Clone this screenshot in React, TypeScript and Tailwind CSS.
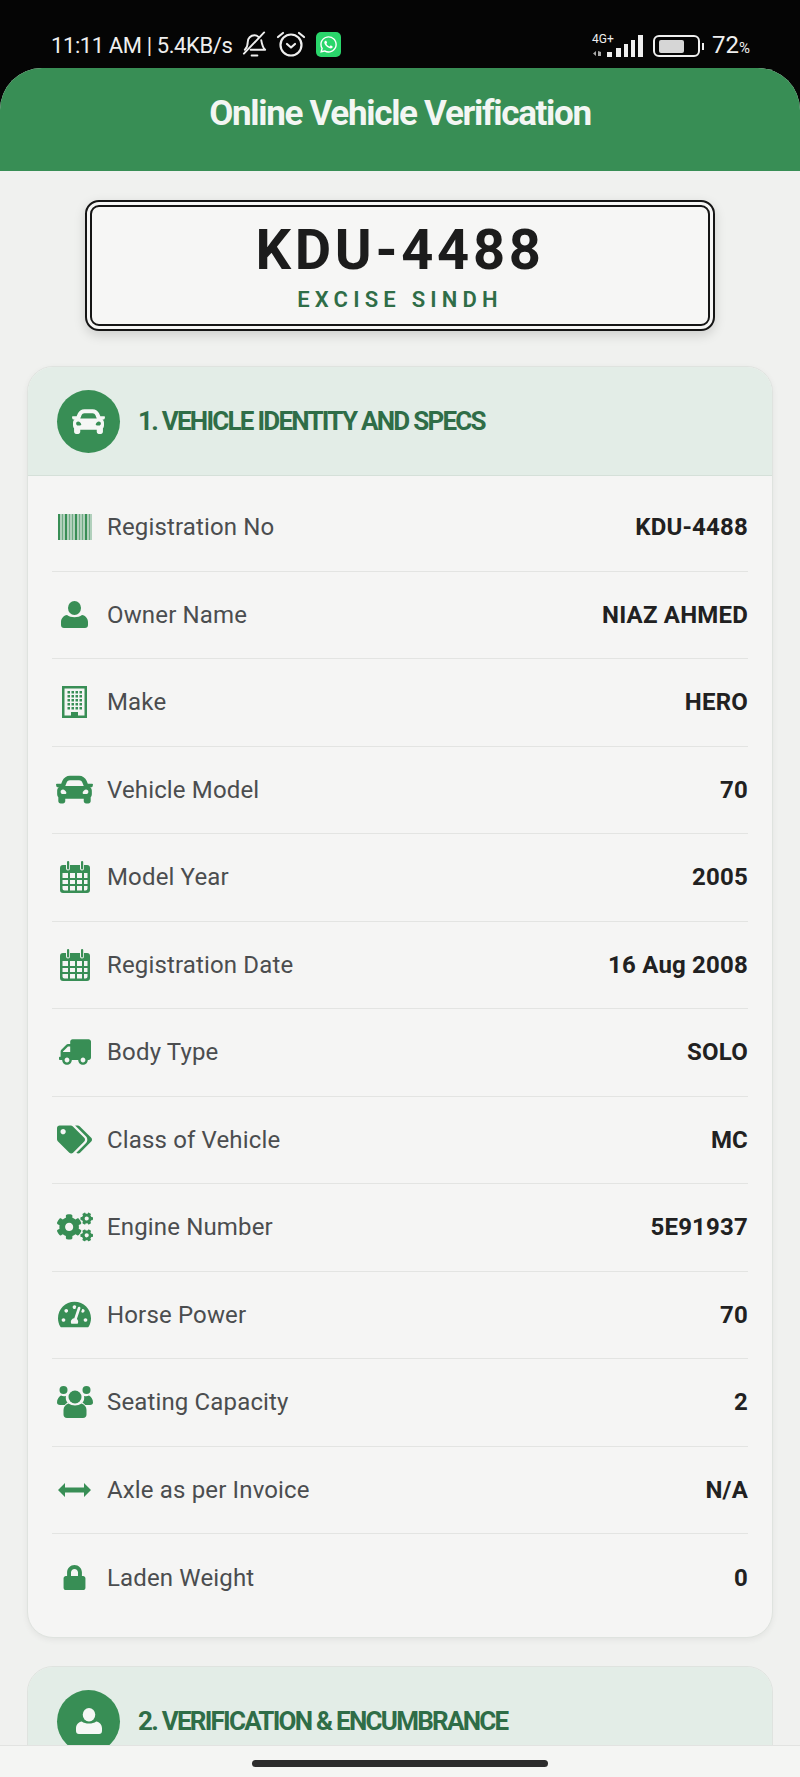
import React from "react";
import { FaCar, FaCogs, FaLock, FaTachometerAlt, FaTags, FaTruck, FaWhatsapp } from "react-icons/fa";

function Barcode() {
  const bars = [2, 1, 1, 1, 2, 1, 1, 1, 1, 1, 2, 1, 1, 1, 1, 1, 2, 1, 1, 1, 1, 1, 2, 1, 1];
  let x = 0;
  return (
    <svg width="34" height="26" viewBox="0 0 34 26">
      {bars.map((w, i) => {
        const rect = <rect key={i} x={x} y="0" width={w} height="26" fill="currentColor" opacity={w === 1 ? 0.7 : 1} />;
        x += w + 0.5;
        return rect;
      })}
    </svg>
  );
}

function PersonIcon({ size = 27 }: { size?: number }) {
  return (
    <svg width={size} height={size} viewBox="0 0 27 27" fill="currentColor">
      <ellipse cx="13.500" cy="7" rx="6.500" ry="7" />
      <path d="M6 14c2 1.500 4.500 2.200 7.500 2.200S19 15.500 21 14c3.500.6 6 3.500 6 7v3c0 2-1.200 3-3 3H3c-1.800 0-3-1-3-3v-3c0-3.500 2.500-6.400 6-7z" />
    </svg>
  );
}

function BuildingIcon() {
  const cols = [5.5, 9.5, 13.5, 17.5];
  const lines = [5, 9, 13, 17, 21];
  return (
    <svg width="25" height="32" viewBox="0 0 25 32" fill="currentColor">
      <path fillRule="evenodd" d="M0 0h25v32H0zM2.500 2.500v27h20v-27z" />
      {lines.map((y) => cols.map((x) => <rect key={`${x}-${y}`} x={x} y={y} width="2.500" height="2.500" />))}
      <rect x="9" y="26" width="7" height="5" />
    </svg>
  );
}

function CalendarIcon() {
  return (
    <svg width="30" height="32" viewBox="0 0 30 32" fill="currentColor">
      <path fillRule="evenodd" d="M3 4h3v3.500a2 2 0 0 0 4 0V4h10v3.500a2 2 0 0 0 4 0V4h3a3 3 0 0 1 3 3v22a3 3 0 0 1-3 3H3a3 3 0 0 1-3-3V7a3 3 0 0 1 3-3zM2.500 12v5h5.500v-5zm7.500 0v5h5v-5zm7 0v5h5v-5zm7 0v5h3.500v-5zM2.500 19v4h5.500v-4zm7.500 0v4h5v-4zm7 0v4h5v-4zm7 0v4h3.500v-4zM2.500 25v2.500a2 2 0 0 0 2 2H8V25zm7.500 0v4.500h5V25zm7 0v4.500h5V25zm7 0v4.500h1.500a2 2 0 0 0 2-2V25z" />
      <rect x="7" y="0" width="2.200" height="8.500" rx="1.100" />
      <rect x="21" y="0" width="2.200" height="8.500" rx="1.100" />
    </svg>
  );
}

function GroupIcon() {
  return (
    <svg width="36" height="32" viewBox="0 0 36 32" fill="currentColor">
      <circle cx="6.500" cy="4" r="4" />
      <circle cx="29.500" cy="4" r="4" />
      <path d="M4 9.500c1.500.8 3 .8 5 .5-.6 2.500 0 5 1.500 6.500-1.200.7-2 1.500-2.800 2.500H3c-2 0-3-1-3-2.500 0-3 1.500-5.500 4-7zM32 9.500c-1.500.8-3 .8-5 .5.6 2.500 0 5-1.500 6.500 1.200.7 2 1.500 2.800 2.500H33c2 0 3-1 3-2.500 0-3-1.500-5.500-4-7z" />
      <circle cx="18" cy="11" r="6.500" />
      <path d="M11.500 17.500c1.800 1.300 4 2 6.500 2s4.700-.7 6.500-2c3 .8 5 3.500 5 6.500v4.500c0 2-1.300 3.500-3.500 3.500H10c-2.200 0-3.500-1.500-3.500-3.500V24c0-3 2-5.700 5-6.500z" />
    </svg>
  );
}

function AxleIcon() {
  return (
    <svg width="33" height="14" viewBox="0 0 33 14" fill="currentColor">
      <path d="M0 7 7 0v4.500h19V0l7 7-7 7V9.500H7V14z" />
    </svg>
  );
}

const rows = [
  { icon: <Barcode />, label: "Registration No", value: "KDU-4488" },
  { icon: <PersonIcon />, label: "Owner Name", value: "NIAZ AHMED" },
  { icon: <BuildingIcon />, label: "Make", value: "HERO" },
  { icon: <FaCar size={37} />, label: "Vehicle Model", value: "70" },
  { icon: <CalendarIcon />, label: "Model Year", value: "2005" },
  { icon: <CalendarIcon />, label: "Registration Date", value: "16 Aug 2008" },
  { icon: <FaTruck size={32} className="-scale-x-100" />, label: "Body Type", value: "SOLO" },
  { icon: <FaTags size={35} />, label: "Class of Vehicle", value: "MC" },
  { icon: <FaCogs size={36} />, label: "Engine Number", value: "5E91937" },
  { icon: <FaTachometerAlt size={33} />, label: "Horse Power", value: "70" },
  { icon: <GroupIcon />, label: "Seating Capacity", value: "2" },
  { icon: <AxleIcon />, label: "Axle as per Invoice", value: "N/A" },
  { icon: <FaLock size={25} />, label: "Laden Weight", value: "0" },
];

function SectionHead({ icon, title }: { icon: React.ReactNode; title: string }) {
  return (
    <div className="flex h-[109px] items-center gap-[18px] border-b border-[#d5e0d9] bg-[#e3ede7] pl-[29px]">
      <div className="flex h-[63px] w-[63px] items-center justify-center rounded-full bg-[#388e55] text-[#f5f7f5]">{icon}</div>
      <h2 className="text-[26px] font-bold tracking-[-1.75px] text-[#2f6d47]">{title}</h2>
    </div>
  );
}

function StatusBar() {
  return (
    <div className="flex h-[68px] shrink-0 items-start justify-between bg-[#050505] pl-[51px] pr-[50px] pt-[30px] text-[#efefef]">
      <div className="flex items-center">
        <span className="w-[190px] whitespace-nowrap pt-[3px] text-[22px] leading-[25px] tracking-[-0.4px]">11:11 AM | 5.4KB/s</span>
        <svg width="27" height="28" viewBox="0 0 28 28" fill="none" stroke="currentColor" strokeWidth="2" strokeLinecap="round" strokeLinejoin="round">
          <path d="M4 20c2-2 3-4 3-8s3-7 7-7c2 0 3 .6 4 1.600M21 10c.5 3 1 7 4 10H10" />
          <path d="M3 24 24 2M11 26h6" />
        </svg>
        <svg width="30" height="28" viewBox="0 0 30 28" fill="none" stroke="currentColor" strokeWidth="2.200" strokeLinecap="round" strokeLinejoin="round" className="ml-[8px]">
          <circle cx="15" cy="15" r="10.500" />
          <path d="M11 14l4 3.500 4-3.500M2 7l5-4M28 7l-5-4" />
        </svg>
        <div className="ml-[10px] flex h-[25px] w-[25px] items-center justify-center rounded-[5px] bg-[#2ad66b] text-white">
          <FaWhatsapp size={19} />
        </div>
      </div>
      <div className="flex items-center">
        <div className="relative h-[24px] w-[52px]">
          <span className="absolute left-0 -top-[1px] text-[12px] leading-[13px]">4G+</span>
          <svg width="52" height="24" viewBox="0 0 52 24" fill="currentColor">
            <path d="M4 17v5l-3-2.500zM6 17l3 1v4H6z" opacity="0.7" />
            <rect x="15" y="18" width="5" height="5" />
            <rect x="24" y="14" width="5" height="9" />
            <rect x="32" y="10" width="4" height="13" />
            <rect x="39" y="6" width="4" height="17" />
            <rect x="46" y="1" width="5" height="22" />
          </svg>
        </div>
        <div className="ml-[9px] flex h-[22px] w-[47px] items-center rounded-[6px] border-2 border-[#efefef] px-[4px]">
          <div className="h-[13px] w-[25px] rounded-[2px] bg-[#d6d6d6]"></div>
        </div>
        <div className="ml-[2px] h-[7px] w-[2px] bg-[#efefef]"></div>
        <span className="ml-[8px] pt-[1px] text-[24px] leading-[28px]">
          72<span className="text-[15px]">%</span>
        </span>
      </div>
    </div>
  );
}

export default function App() {
  return (
    <div className="flex h-[1777px] flex-col overflow-hidden bg-[#050505] font-['Roboto',sans-serif]">
      <StatusBar />
      <div className="min-h-0 flex-1 overflow-hidden rounded-t-[42px] bg-[#f0f1ef]">
        <header className="flex h-[103px] items-center justify-center bg-[#388e55] pb-[11px]">
          <h1 className="text-[35px] font-bold tracking-[-1.3px] text-[#f3f6f3]">Online Vehicle Verification</h1>
        </header>

        <div className="mx-[85px] mt-[29px] flex h-[131px] flex-col items-center rounded-[14px] border-[7px] border-double border-[#151515] bg-[#f6f6f5] pt-[10px] shadow-[0_4px_12px_rgba(0,0,0,0.15)]">
          <div className="text-[56px] leading-[66px] font-bold tracking-[3.7px] text-[#1c1c1c]">KDU-4488</div>
          <div className="mt-[4px] text-[22px] leading-[26px] font-semibold tracking-[5.2px] text-[#2f6d47]">EXCISE SINDH</div>
        </div>

        <section className="mx-[27px] mt-[35px] h-[1272px] overflow-hidden rounded-[26px] border border-[#dfe3df] bg-[#f5f5f4] shadow-[0_2px_6px_rgba(0,0,0,0.06)]">
          <SectionHead icon={<FaCar size={33} />} title="1. VEHICLE IDENTITY AND SPECS" />
          <div className="px-[24px] pt-[8px]">
            {rows.map((row, index) => (
              <div
                key={row.label}
                className={`flex h-[87.5px] items-center justify-between ${index < rows.length - 1 ? "border-b border-[#e3e4e2]" : ""}`}
              >
                <div className="flex items-center">
                  <div className="flex w-[45px] justify-center text-[#388e55]">{row.icon}</div>
                  <span className="ml-[10px] text-[24px] tracking-[0.15px] text-[#4b4d4f]">{row.label}</span>
                </div>
                <span className="text-[24px] font-bold tracking-[0.2px] text-[#212121]">{row.value}</span>
              </div>
            ))}
          </div>
        </section>

        <section className="mx-[27px] mt-[28px] overflow-hidden rounded-[26px] border border-[#dfe3df] bg-[#f5f5f4]">
          <SectionHead icon={<PersonIcon size={26} />} title="2. VERIFICATION & ENCUMBRANCE" />
        </section>
      </div>
      <div className="flex h-[32px] shrink-0 justify-center border-t border-[#e2e3e1] bg-[#f4f5f3] pt-[14px]">
        <div className="h-[7px] w-[296px] rounded-full bg-[#2c2c2c]"></div>
      </div>
    </div>
  );
}
